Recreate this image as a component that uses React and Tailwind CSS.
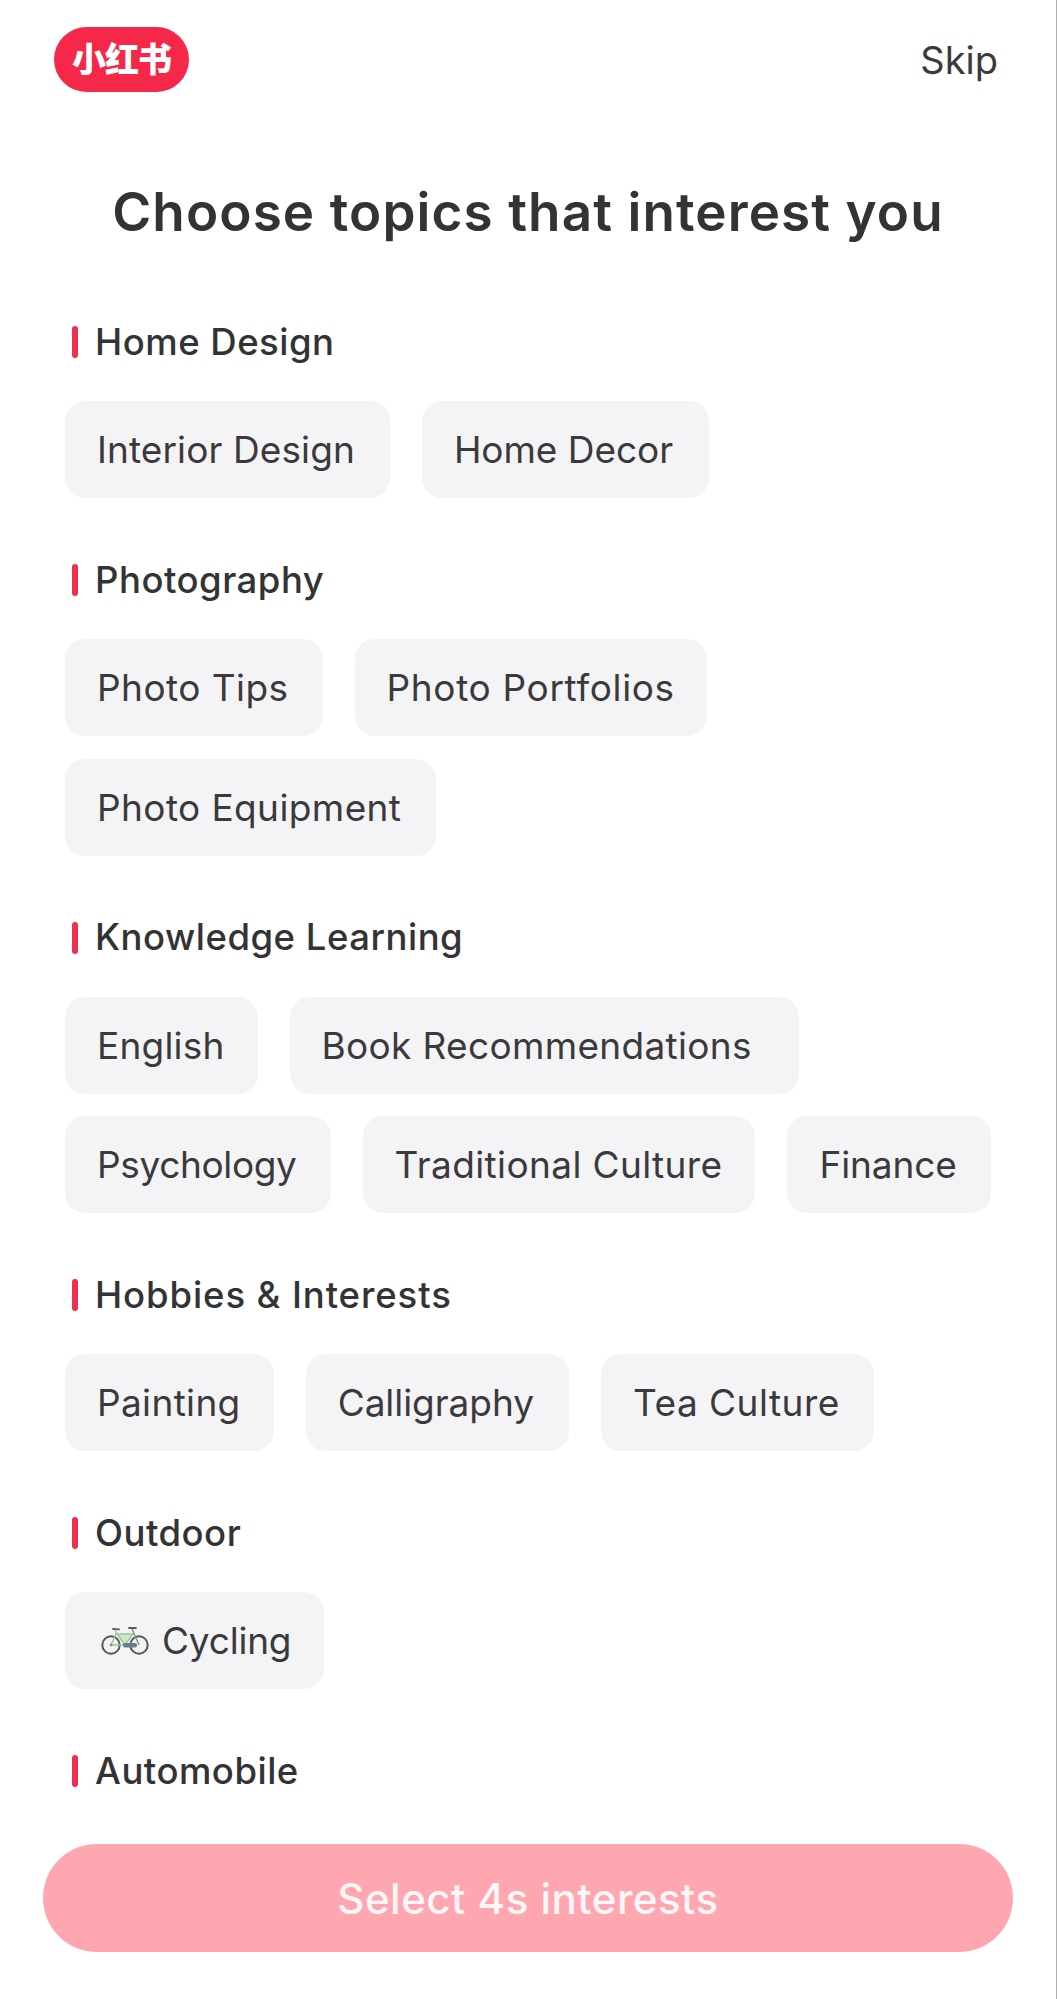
const SANS = "font-['Inter','Noto_Sans','Noto_Sans_CJK_SC',sans-serif]";

function Bike() {
  return (
    <svg width="48" height="30" viewBox="0 0 48 30" fill="none" className="shrink-0">
      <circle cx="10" cy="19" r="8.7" stroke="#54595c" strokeWidth="2" fill="#f0f3f0" />
      <circle cx="38" cy="19" r="8.7" stroke="#54595c" strokeWidth="2" fill="#f0f3f0" />
      <path d="M15 8 L32 8 L24 19 Z" fill="#cfe8c4" />
      <path d="M14 5 L24 19 L32 8 L15 8 L10 19 L24 19" stroke="#9cc596" strokeWidth="1.4" strokeLinejoin="round" />
      <path d="M31 3 L38 19" stroke="#7f9c80" strokeWidth="1.5" />
      <path d="M12 3 L18 3.4 M28 2 L35 2" stroke="#555b5e" strokeWidth="1.8" strokeLinecap="round" />
      <rect x="22" y="17" width="14" height="4.5" rx="2" fill="#66808a" />
      <circle cx="10" cy="19" r="1.4" fill="#8a9094" />
    </svg>
  );
}

function Pill({ children, className = "" }) {
  return (
    <div className={`h-[97px] flex items-center rounded-[20px] bg-[#f4f4f6] pl-[32px] text-[37px] leading-none text-[#3a3a3c] whitespace-nowrap ${className}`}>
      {children}
    </div>
  );
}

function Section({ title, className = "tracking-[0.5px]", children }) {
  return (
    <section className="mb-[62px]">
      <div className="h-[40px] flex items-center pl-[7px] mb-[39px]">
        <span className="w-[6px] h-[32px] rounded-full bg-[#ee2f4e] mr-[17px]" />
        <h2 className={`text-[36.5px] leading-none font-medium text-[#333335] ${className}`}>{title}</h2>
      </div>
      <div className="flex flex-wrap gap-x-[32px] gap-y-[22.5px]">{children}</div>
    </section>
  );
}

export default function App() {
  return (
    <div className={`relative h-[1999px] overflow-hidden bg-white border-r border-[#b0b0b0] ${SANS}`}>
      <header className="h-[120px] flex items-start justify-between pl-[54px] pr-[58px] pt-[27px]">
        <div className="w-[135px] h-[65px] rounded-full bg-[#f5284a] flex items-center justify-center text-white text-[34px] font-black leading-none tracking-[-1px]">
          小红书
        </div>
        <span className="mt-[10px] text-[38px] leading-[46px] text-[#3a3a3c]">Skip</span>
      </header>
      <h1 className="h-[70px] mt-[57px] flex items-center justify-center text-[53px] leading-none font-semibold tracking-[1.1px] text-[#333335]">
        Choose topics that interest you
      </h1>
      <main className="mt-[75px] pl-[65px] pr-[50px]">
        <Section title="Home Design">
          <Pill className="pr-[35px] tracking-[0.1px]">Interior Design</Pill>
          <Pill className="pr-[36px] tracking-[-0.05px]">Home Decor</Pill>
        </Section>
        <Section title="Photography">
          <Pill className="pr-[34px] tracking-[0.45px]">Photo Tips</Pill>
          <Pill className="pr-[32px] tracking-[0.65px]">Photo Portfolios</Pill>
          <Pill className="pr-[35px] tracking-[0.4px]">Photo Equipment</Pill>
        </Section>
        <Section title="Knowledge Learning">
          <Pill className="pr-[33px] tracking-[0.2px]">English</Pill>
          <Pill className="pr-[47px] tracking-[0.33px]">Book Recommendations</Pill>
          <Pill className="pr-[34px] tracking-[-0.35px]">Psychology</Pill>
          <Pill className="pr-[33px] tracking-[0.38px]">Traditional Culture</Pill>
          <Pill className="pr-[34px] tracking-[-0.1px]">Finance</Pill>
        </Section>
        <Section title="Hobbies &amp; Interests" className="tracking-[0.9px]">
          <Pill className="pr-[33px] tracking-[0.35px]">Painting</Pill>
          <Pill className="pr-[35px] tracking-[-0.05px]">Calligraphy</Pill>
          <Pill className="pr-[34px] tracking-[0.5px]">Tea Culture</Pill>
        </Section>
        <Section title="Outdoor">
          <Pill className="gap-[13px] pl-[36px] pr-[33px] tracking-[-0.2px]"><Bike />Cycling</Pill>
        </Section>
        <Section title="Automobile">
          <span />
        </Section>
      </main>
      <button className="absolute left-[43px] top-[1844px] w-[970px] h-[108px] pt-[2px] rounded-full bg-[#fea7b1] text-white/90 text-[42px] font-medium tracking-[0.5px] leading-none">
        Select 4s interests
      </button>
    </div>
  );
}
